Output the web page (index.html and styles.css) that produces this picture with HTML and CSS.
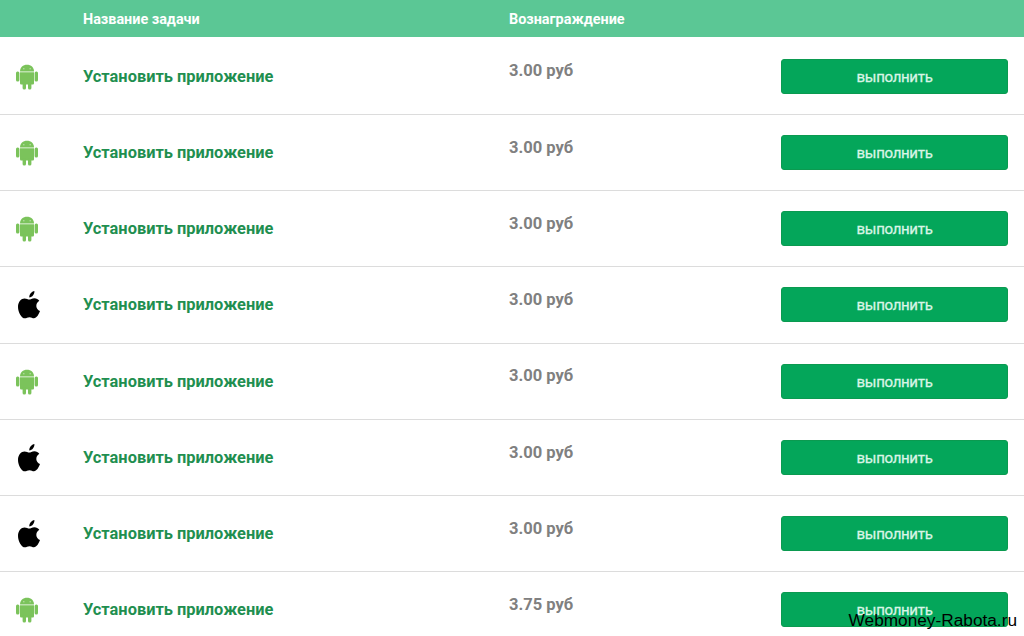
FILE: index.html
```html
<!DOCTYPE html>
<html lang="ru">

<head>
  <meta charset="UTF-8" />
  <meta name="viewport" content="width=device-width, initial-scale=1.0" />
  <title>Задачи</title>
  <link rel="stylesheet" href="styles.css">
</head>

<body>
  <svg class="sprite">
    <symbol id="android" viewBox="0 0 22 26">
      <path d="M4 7.5C4 3.2 7 .7 11 .7s7 2.5 7 6.8z" />
      <path d="M4 8.2h14v11c0 .9-.6 1.4-1.4 1.4H5.4c-.8 0-1.4-.5-1.4-1.4z" />
      <rect x="0" y="7.5" width="3.4" height="10" rx="1.5" />
      <rect x="18.6" y="7.5" width="3.4" height="10" rx="1.5" />
      <rect x="6.6" y="18" width="3.4" height="7.5" rx="1.5" />
      <rect x="12" y="18" width="3.4" height="7.5" rx="1.5" />
      <circle class="eye" cx="7.9" cy="4.7" r=".5" />
      <circle class="eye" cx="14.1" cy="4.7" r=".5" />
    </symbol>
    <symbol id="apple" viewBox="0 0 22 28">
      <path d="M16.4 0c.3 3.1-2.1 6.3-5.1 6.4C11 3.4 13.6.5 16.4 0z" />
      <path d="M11.2 8.6c1.3 0 2.7-1.4 5.2-1.4 2 0 3.8 1 4.9 2.5-4.4 2.7-3.7 8.6.7 10.3-1.2 3.3-3.5 7.3-6 7.3-1.7 0-2.5-1.1-4.5-1.1s-3 1.1-4.6 1.1C3.7 27.3 0 21.3 0 15.9 0 10.5 3.2 7.4 6.5 7.4c2 0 3.5 1.2 4.7 1.2z" />
    </symbol>
  </svg>

  <div class="tasks">
    <div class="tasks-head">
      <span class="name">Название задачи</span>
      <span>Вознаграждение</span>
    </div>
    <div class="task">
      <svg class="icon android"><use href="#android" /></svg>
      <a class="title">Установить приложение</a>
      <span class="price">3.00 руб</span>
      <button class="btn">выполнить</button>
    </div>
    <div class="task">
      <svg class="icon android"><use href="#android" /></svg>
      <a class="title">Установить приложение</a>
      <span class="price">3.00 руб</span>
      <button class="btn">выполнить</button>
    </div>
    <div class="task">
      <svg class="icon android"><use href="#android" /></svg>
      <a class="title">Установить приложение</a>
      <span class="price">3.00 руб</span>
      <button class="btn">выполнить</button>
    </div>
    <div class="task">
      <svg class="icon apple"><use href="#apple" /></svg>
      <a class="title">Установить приложение</a>
      <span class="price">3.00 руб</span>
      <button class="btn">выполнить</button>
    </div>
    <div class="task">
      <svg class="icon android"><use href="#android" /></svg>
      <a class="title">Установить приложение</a>
      <span class="price">3.00 руб</span>
      <button class="btn">выполнить</button>
    </div>
    <div class="task">
      <svg class="icon apple"><use href="#apple" /></svg>
      <a class="title">Установить приложение</a>
      <span class="price">3.00 руб</span>
      <button class="btn">выполнить</button>
    </div>
    <div class="task">
      <svg class="icon apple"><use href="#apple" /></svg>
      <a class="title">Установить приложение</a>
      <span class="price">3.00 руб</span>
      <button class="btn">выполнить</button>
    </div>
    <div class="task">
      <svg class="icon android"><use href="#android" /></svg>
      <a class="title">Установить приложение</a>
      <span class="price">3.75 руб</span>
      <button class="btn">выполнить</button>
    </div>
  </div>
  <div class="watermark">Webmoney-Rabota.ru</div>
</body>

</html>
```
FILE: styles.css
```css
body {
  margin: 0;
  height: 636px;
  overflow: hidden;
  background: #fff;
  font-family: Roboto, sans-serif;
}

.sprite {
  display: none;
}

.tasks-head,
.task {
  display: grid;
  grid-template-columns: 83px 426px 272px 227px;
  align-items: center;
}

.tasks-head {
  height: 37px;
  margin-bottom: 1.5px;
  background: #5bc795;
  color: #fff;
  font-size: 14.4px;
  font-weight: 700;
}

.tasks-head span {
  padding-top: 1px;
}

.tasks-head .name {
  grid-column: 2;
}

.task {
  box-sizing: border-box;
  height: 76.28px;
  border-bottom: 1px solid #dcdcdc;
}

.icon {
  margin-left: 16px;
}

.android {
  width: 22px;
  height: 26px;
  padding-top: 1px;
  fill: #7bc35b;
}

.eye {
  fill: #fff;
}

.apple {
  width: 22px;
  height: 28px;
  padding-top: 1px;
  margin-left: 18px;
  fill: #000;
}

.title {
  color: #1f8f50;
  font-size: 16.4px;
  font-weight: 700;
}

.price {
  padding-bottom: 10.5px;
  color: #808080;
  font-size: 16.5px;
  font-weight: 700;
}

.btn {
  height: 35px;
  padding: 1px 0 0;
  border: 1px solid #0b9a50;
  border-radius: 3px;
  background: #04a65a;
  color: #d9f5e6;
  font-family: Roboto, sans-serif;
  font-size: 15px;
  letter-spacing: -0.3px;
  -webkit-text-stroke: 0.3px #d9f5e6;
}

.watermark {
  position: absolute;
  right: 7px;
  bottom: 7px;
  color: #000;
  font-family: "Liberation Sans", sans-serif;
  font-size: 17.25px;
  line-height: 18px;
}
```
